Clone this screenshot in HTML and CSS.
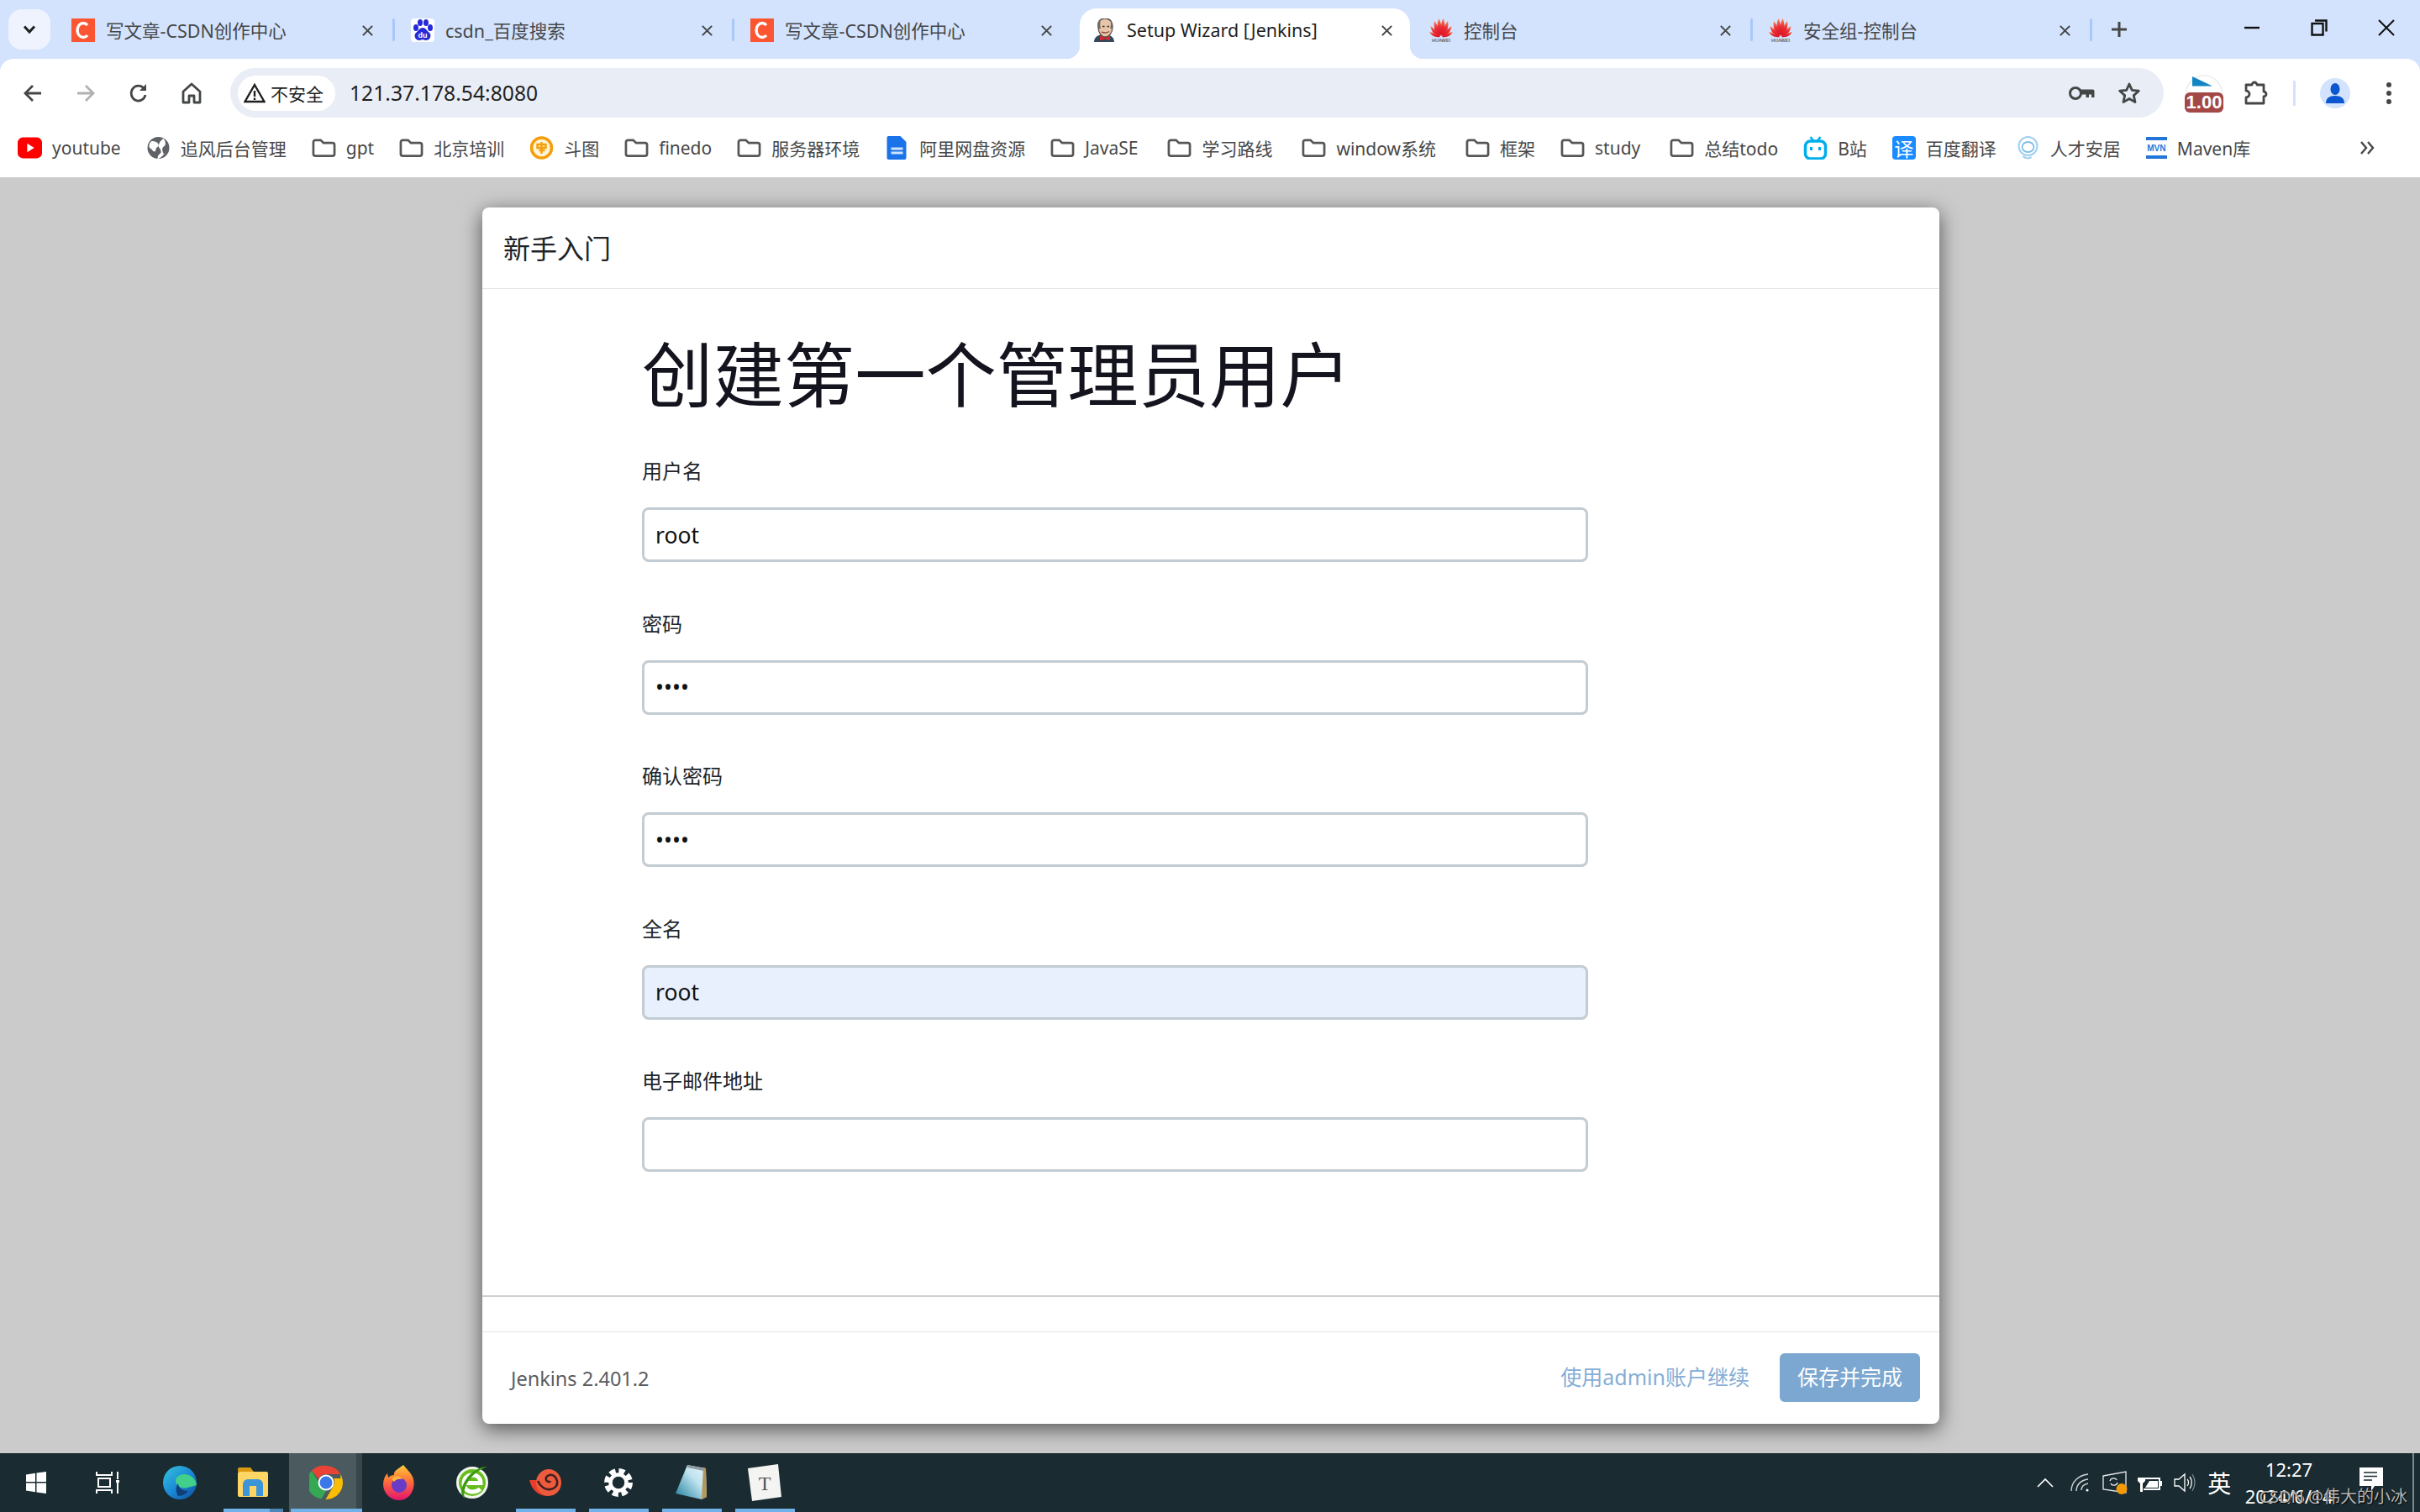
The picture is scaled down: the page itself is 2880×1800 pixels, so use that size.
FILE: index.html
```html
<!DOCTYPE html>
<html lang="zh-CN">
<head>
  <meta charset="UTF-8" />
  <title>Setup Wizard [Jenkins]</title>
  <link rel="stylesheet" href="styles.css">
</head>
<body>
  <svg class="defs" width="0" height="0">
    <symbol id="i-csdn" viewBox="0 0 28 28">
      <rect width="28" height="28" fill="#fc5531"/>
      <path d="M19 8a7 8.5 0 1 0 0 12" fill="none" stroke="#fff" stroke-width="3.4"/>
    </symbol>
    <symbol id="i-baidu" viewBox="0 0 28 28">
      <rect width="28" height="28" rx="4" fill="#fff"/>
      <g fill="#2529d8">
        <ellipse cx="6" cy="11" rx="3" ry="4"/>
        <ellipse cx="11" cy="5" rx="3" ry="4"/>
        <ellipse cx="18" cy="5" rx="3" ry="4"/>
        <ellipse cx="23" cy="11" rx="3" ry="4"/>
        <path d="M14 11c4 0 5 4 8 6 3 3 1 9-4 9-2 0-3-1-4-1s-2 1-4 1c-5 0-7-6-4-9 3-2 4-6 8-6z"/>
      </g>
    </symbol>
    <symbol id="i-huawei" viewBox="0 0 28 28">
      <defs>
        <linearGradient id="hw" x1="0" y1="0" x2="0" y2="1"><stop offset="0" stop-color="#f58a5c"/><stop offset=".5" stop-color="#ea2a35"/><stop offset="1" stop-color="#d9121f"/></linearGradient>
      </defs>
      <g fill="url(#hw)">
        <path d="M13.500 21C9 15 8.500 6 11.500 0c3 6 4 14 2 21z"/>
        <path d="M14.500 21c4.500-6 5-15 2-21-3 6-4 14-2 21z"/>
        <path d="M13 21C7 17 4.500 10 6 3c4 5 7 12 7 18z"/>
        <path d="M15 21c6-4 8.500-11 7-18-4 5-7 12-7 18z"/>
        <path d="M13 21.500C6 20 2 15 1.500 9 6 12 11 16 13 21.500z"/>
        <path d="M15 21.500c7-1.500 11-6.500 11.500-12.500C22 12 17 16 15 21.500z"/>
        <path d="M13 22C7 23 2.500 20.500 0 16c5 .5 10 2.500 13 6z"/>
        <path d="M15 22c6 1 10.500-1.500 13-6-5 .5-10 2.500-13 6z"/>
      </g>
    </symbol>
    <symbol id="i-jenkins" viewBox="0 0 28 28">
      <path d="M2 28c0-6 5-9 12-9s12 3 12 9z" fill="#2f4a5c"/>
      <path d="M7 10C6 4 9 0 15 0s9 4 9 10c0 7-4 12-9 12-4 0-8-5-8-12z" fill="#e8c4a8" stroke="#57534f" stroke-width="1.300"/>
      <path d="M7 13C5 7 7 3 10 1c-1 4-1 8 0 11zM24 12c1-4 0-7-2-9 0 4 0 7-1 9z" fill="#6f6a66"/>
      <path d="M12 9.500h2.500M17.500 9.500H20" stroke="#333" stroke-width="1.300"/>
      <path d="M11 16c3 1.500 6 1.500 9-.5" fill="none" stroke="#8d4a3e" stroke-width="1.400"/>
      <path d="M9 20.500l6 2.500 6-2.500v6l-6-2-6 2z" fill="#d8262c"/>
    </symbol>
    <symbol id="i-folder" viewBox="0 0 30 24">
      <path d="M2 5a2.500 2.500 0 0 1 2.500-2.500h6.500l3.500 3.500h11a2.500 2.500 0 0 1 2.500 2.500v11a2.500 2.500 0 0 1-2.500 2.500h-21a2.500 2.500 0 0 1-2.500-2.500z" fill="none" stroke="#565656" stroke-width="2.800"/>
    </symbol>
    <symbol id="i-close" viewBox="0 0 16 16">
      <path d="M2 2l12 12M14 2L2 14" fill="none" stroke="#444746" stroke-width="2.200"/>
    </symbol>
  </svg>

  <div class="browser-top">
    <div class="tabstrip">
      <button class="tab-search">
        <svg width="16" height="12" viewBox="0 0 16 12"><path d="M2 2.500l6 6.500 6-6.500" fill="none" stroke="#1f1f1f" stroke-width="3"/></svg>
      </button>
      <div class="tabs">
        <div class="tab">
          <svg class="favicon"><use href="#i-csdn"/></svg>
          <span class="tab-title">写文章-CSDN创作中心</span>
          <svg class="tab-close"><use href="#i-close"/></svg>
          <span class="tab-sep"></span>
        </div>
        <div class="tab">
          <svg class="favicon" viewBox="0 0 28 28">
            <use href="#i-baidu" width="28" height="28"/>
            <text x="14" y="23" class="svg-small" font-size="9" fill="#fff" text-anchor="middle">du</text>
          </svg>
          <span class="tab-title">csdn_百度搜索</span>
          <svg class="tab-close"><use href="#i-close"/></svg>
          <span class="tab-sep"></span>
        </div>
        <div class="tab">
          <svg class="favicon"><use href="#i-csdn"/></svg>
          <span class="tab-title">写文章-CSDN创作中心</span>
          <svg class="tab-close"><use href="#i-close"/></svg>
        </div>
        <div class="tab active">
          <svg class="favicon"><use href="#i-jenkins"/></svg>
          <span class="tab-title">Setup Wizard [Jenkins]</span>
          <svg class="tab-close"><use href="#i-close"/></svg>
        </div>
        <div class="tab">
          <svg class="favicon" viewBox="0 0 28 28">
            <use href="#i-huawei" width="28" height="28"/>
            <text x="14" y="28" class="svg-small" font-size="5.500" fill="#666" text-anchor="middle">HUAWEI</text>
          </svg>
          <span class="tab-title">控制台</span>
          <svg class="tab-close"><use href="#i-close"/></svg>
          <span class="tab-sep"></span>
        </div>
        <div class="tab">
          <svg class="favicon" viewBox="0 0 28 28">
            <use href="#i-huawei" width="28" height="28"/>
            <text x="14" y="28" class="svg-small" font-size="5.500" fill="#666" text-anchor="middle">HUAWEI</text>
          </svg>
          <span class="tab-title">安全组-控制台</span>
          <svg class="tab-close"><use href="#i-close"/></svg>
          <span class="tab-sep"></span>
        </div>
      </div>
      <svg class="tab-new" width="20" height="20" viewBox="0 0 20 20"><path d="M10 1v18M1 10h18" fill="none" stroke="#444746" stroke-width="3"/></svg>
      <div class="window-controls">
        <span><svg width="20" height="20" viewBox="0 0 20 20"><path d="M1 10h18" stroke="#111" stroke-width="2.400"/></svg></span>
        <span><svg width="20" height="20" viewBox="0 0 20 20"><path d="M5 1.500h13.500v13M1.500 5h13v13.500h-13z" fill="none" stroke="#111" stroke-width="2.400"/></svg></span>
        <span><svg width="20" height="20" viewBox="0 0 20 20"><path d="M1 1l18 18M19 1L1 19" fill="none" stroke="#111" stroke-width="2"/></svg></span>
      </div>
    </div>

    <div class="toolbar">
      <span class="nav-btn"><svg width="24" height="24" viewBox="0 0 24 24"><path d="M22 12H3M12 3l-9 9 9 9" fill="none" stroke="#444746" stroke-width="2.800"/></svg></span>
      <span class="nav-btn"><svg width="24" height="24" viewBox="0 0 24 24"><path d="M2 12h19M12 3l9 9-9 9" fill="none" stroke="#b0b1b3" stroke-width="2.800"/></svg></span>
      <span class="nav-btn"><svg width="24" height="24" viewBox="0 0 24 24"><path d="M20 14a8.500 9 0 1 1-2-8" fill="none" stroke="#444746" stroke-width="2.800"/><path d="M21 1v8h-8z" fill="#444746"/></svg></span>
      <span class="nav-btn"><svg width="24" height="26" viewBox="0 0 24 26"><path d="M2 11L12 2l10 9v13h-7v-8H9v8H2z" fill="none" stroke="#444746" stroke-width="2.800" stroke-linejoin="round"/></svg></span>
      <div class="omnibox">
        <div class="chip">
          <svg width="26" height="24" viewBox="0 0 26 24"><path d="M13 2l11.500 20h-23z" fill="none" stroke="#1f1f1f" stroke-width="2.400"/><path d="M13 9v7M13 17.500v2.500" stroke="#1f1f1f" stroke-width="2.400"/></svg>
          <span>不安全</span>
        </div>
        <span class="url">121.37.178.54:8080</span>
        <svg class="omni-key" width="32" height="20" viewBox="0 0 32 20"><circle cx="9" cy="10" r="6.500" fill="none" stroke="#444746" stroke-width="3"/><path d="M15 5.500h14.500a2 2 0 0 1 2 2V15h-3.500v-3.500h-3V15h-3.500v-3.500H15z" fill="#444746"/></svg>
        <svg class="omni-star" width="28" height="28" viewBox="0 0 28 28"><path d="M14 3l3.300 7.400 8 .8-6 5.400 1.700 8L14 20.500 7 24.600l1.700-8-6-5.400 8-.8z" fill="none" stroke="#444746" stroke-width="2.800" stroke-linejoin="round"/></svg>
      </div>
      <div class="ext-badge">
        <svg width="46" height="24" viewBox="0 0 46 24"><path d="M1 22C3 9 12 1 23 1s20 8 22 21" fill="none" stroke="#ececec" stroke-width="1.500"/><path d="M9 2l24 11.500H9z" fill="#1286c4"/></svg>
        <span>1.00</span>
      </div>
      <svg class="ext-puzzle" width="30" height="32" viewBox="0 0 30 32"><path d="M3 6h7a3 3 0 0 1 6 0h8v8a3 3 0 0 1 0 6v8H3v-7a4 4 0 0 0 0-8z" fill="none" stroke="#444746" stroke-width="2.800" stroke-linejoin="round"/></svg>
      <span class="toolbar-sep"></span>
      <span class="profile">
        <svg width="22" height="24" viewBox="0 0 22 24"><ellipse cx="11" cy="7" rx="5.500" ry="7" fill="#0b57d0"/><path d="M0 24c0-6 4-9 11-9s11 3 11 9z" fill="#0b57d0"/></svg>
      </span>
      <svg class="menu-dots" width="8" height="26" viewBox="0 0 8 26"><circle cx="4" cy="3" r="3" fill="#444746"/><circle cx="4" cy="13" r="3" fill="#444746"/><circle cx="4" cy="23" r="3" fill="#444746"/></svg>
    </div>
  </div>

  <div class="bookmarks">
    <a class="bookmark">
      <svg class="bm-icon" viewBox="0 0 28 24"><rect width="28" height="24" rx="6" fill="#f00"/><path d="M11 7l8 5-8 5z" fill="#fff"/></svg>
      <span>youtube</span>
    </a>
    <a class="bookmark">
      <svg class="bm-icon" viewBox="0 0 28 28"><circle cx="14" cy="14" r="13" fill="#5f6368"/><path d="M6 6c4 0 7 1 8 4s-3 3-3 6-3 3-4 1-4-2-4-5 1-5 3-6zM20 3c3 3 3 8 1 9s-3 3-2 6 1 4 3 2c-5 6-7 7-9 7 0-3 1-5 3-6s1-5-1-7 0-8 5-11z" fill="#fff"/></svg>
      <span>追风后台管理</span>
    </a>
    <a class="bookmark"><svg class="bm-icon"><use href="#i-folder"/></svg><span>gpt</span></a>
    <a class="bookmark"><svg class="bm-icon"><use href="#i-folder"/></svg><span>北京培训</span></a>
    <a class="bookmark">
      <svg class="bm-icon" viewBox="0 0 28 28"><circle cx="14" cy="14" r="12" fill="#fff4d8" stroke="#f59e0b" stroke-width="3.500"/><path d="M9 10h10v4H9zM11 17h7M14 7v14" fill="none" stroke="#f59e0b" stroke-width="2.400"/></svg>
      <span>斗图</span>
    </a>
    <a class="bookmark"><svg class="bm-icon"><use href="#i-folder"/></svg><span>finedo</span></a>
    <a class="bookmark"><svg class="bm-icon"><use href="#i-folder"/></svg><span>服务器环境</span></a>
    <a class="bookmark">
      <svg class="bm-icon" viewBox="0 0 28 28"><path d="M4 0h14l7 7v19a2 2 0 0 1-2 2H4a2 2 0 0 1-2-2V2a2 2 0 0 1 2-2z" fill="#1a73e8"/><path d="M7 15h14M7 20h14" stroke="#cfe2ff" stroke-width="3"/></svg>
      <span>阿里网盘资源</span>
    </a>
    <a class="bookmark"><svg class="bm-icon"><use href="#i-folder"/></svg><span>JavaSE</span></a>
    <a class="bookmark bm-push"><svg class="bm-icon"><use href="#i-folder"/></svg><span>学习路线</span></a>
    <a class="bookmark bm-push"><svg class="bm-icon"><use href="#i-folder"/></svg><span>window系统</span></a>
    <a class="bookmark bm-push"><svg class="bm-icon"><use href="#i-folder"/></svg><span>框架</span></a>
    <a class="bookmark"><svg class="bm-icon"><use href="#i-folder"/></svg><span>study</span></a>
    <a class="bookmark bm-push"><svg class="bm-icon"><use href="#i-folder"/></svg><span>总结todo</span></a>
    <a class="bookmark">
      <svg class="bm-icon" viewBox="0 0 28 28"><path d="M8 1l4 5M20 1l-4 5" stroke="#00aeec" stroke-width="2.500"/><rect x="2" y="6" width="24" height="21" rx="6" fill="none" stroke="#00aeec" stroke-width="3.500"/><path d="M9 13v4M19 13v4" stroke="#00aeec" stroke-width="3"/></svg>
      <span>B站</span>
    </a>
    <a class="bookmark">
      <span class="bm-translate">译</span>
      <span>百度翻译</span>
    </a>
    <a class="bookmark bm-pull">
      <svg class="bm-icon" viewBox="0 0 28 28"><ellipse cx="14" cy="12" rx="11" ry="11" fill="none" stroke="#9fd0f2" stroke-width="2"/><ellipse cx="14" cy="13" rx="7" ry="6" fill="none" stroke="#7fbce6" stroke-width="1.800"/><path d="M8 24c3 3 8 3 10 1" fill="none" stroke="#9fd0f2" stroke-width="2"/></svg>
      <span>人才安居</span>
    </a>
    <a class="bookmark">
      <span class="bm-maven">MVN</span>
      <span>Maven库</span>
    </a>
    <svg class="bm-more" width="18" height="16" viewBox="0 0 18 16"><path d="M2 1l6 7-6 7M10 1l6 7-6 7" fill="none" stroke="#444746" stroke-width="2.400"/></svg>
  </div>

  <div class="backdrop">
    <div class="card">
      <div class="card-header">新手入门</div>
      <div class="card-body">
        <h1>创建第一个管理员用户</h1>
        <div class="field">
          <label>用户名</label>
          <input type="text" value="root">
        </div>
        <div class="field">
          <label>密码</label>
          <input type="password" value="root">
        </div>
        <div class="field">
          <label>确认密码</label>
          <input type="password" value="root">
        </div>
        <div class="field">
          <label>全名</label>
          <input class="autofilled" type="text" value="root">
        </div>
        <div class="field">
          <label>电子邮件地址</label>
          <input type="text" value="">
        </div>
      </div>
      <div class="card-spacer"></div>
      <div class="card-footer">
        <span class="version">Jenkins 2.401.2</span>
        <a class="skip-link">使用admin账户继续</a>
        <button class="save-btn">保存并完成</button>
      </div>
    </div>
  </div>

  <div class="taskbar">
    <span class="slot slot-start">
      <svg width="24" height="26" viewBox="0 0 24 26"><path d="M0 3.500l11-1.800V12H0zM12.500 1.500L24 0v12H12.500zM0 13.500h11v10.800L0 22.500zM12.500 13.500H24V26l-11.500-1.600z" fill="#fff"/></svg>
    </span>
    <span class="slot slot-start">
      <svg width="28" height="26" viewBox="0 0 28 26"><path d="M1 0v4h18V0M3 8h14v10H3zM1 26v-4h18v4M26 0v9M26 13v13" fill="none" stroke="#fff" stroke-width="2"/><rect x="24" y="10" width="4" height="3" fill="#fff"/></svg>
    </span>
    <span class="slot">
      <svg width="42" height="42" viewBox="0 0 42 42">
        <defs><linearGradient id="edge" x1="0" y1="0" x2="1" y2="1"><stop offset="0" stop-color="#36c6d8"/><stop offset=".5" stop-color="#1b8ad8"/><stop offset="1" stop-color="#0f4f9c"/></linearGradient></defs>
        <circle cx="21" cy="21" r="20" fill="url(#edge)"/>
        <path d="M41 24c-1-9-8-13-15-13-6 0-10 4-10 8 0 6 8 10 14 8 4-1 8-2 11-3z" fill="#41cf8a"/>
        <path d="M19 22c0 5 5 9 12 9-3 4-7 6-12 6-2-3-4-10 0-15z" fill="#123f7a"/>
      </svg>
    </span>
    <span class="slot running explorer">
      <svg width="36" height="36" viewBox="0 0 36 36"><path d="M0 2a2 2 0 0 1 2-2h13l4 5H0z" fill="#d99a0f"/><rect y="5" width="36" height="30" rx="2" fill="#ffd564"/><path d="M6 34V20a6 6 0 0 1 6-6h12a6 6 0 0 1 6 6v14h-8V22h-8v12z" fill="#3c95d8"/></svg>
    </span>
    <span class="slot running active">
      <svg width="40" height="42" viewBox="0 0 40 40">
        <path d="M20 0a20 20 0 0 1 17.300 10H20a10 10 0 0 0-9 5.500L3 5.700A20 20 0 0 1 20 0z" fill="#ea4335"/>
        <path d="M3 5.700l8.700 14.300A10 10 0 0 0 20 30l-5.500 9.300A20 20 0 0 1 3 5.700z" fill="#34a853"/>
        <path d="M37.300 10A20 20 0 0 1 20 40h-.5l8.800-15A10 10 0 0 0 29 15h8.300z" fill="#fbbc05"/>
        <circle cx="20" cy="20" r="9.500" fill="#fff"/><circle cx="20" cy="20" r="7.500" fill="#3b78e7"/>
      </svg>
    </span>
    <span class="slot">
      <svg width="38" height="42" viewBox="0 0 38 42">
        <defs><linearGradient id="fox" x1="0" y1="0" x2="0" y2="1"><stop offset="0" stop-color="#ffc93a"/><stop offset=".45" stop-color="#ff7139"/><stop offset="1" stop-color="#e3146f"/></linearGradient></defs>
        <path d="M24 0c4 5 8 8 11 14 5 12-2 28-16 28C8 42 0 33 0 23c0-5 2-10 5-13l1 5c2-2 4-3 7-3-1-5 5-7 11-12z" fill="url(#fox)"/>
        <circle cx="19" cy="24" r="9" fill="#6a3bc4"/>
        <path d="M10 16c5-4 11-3 13 1-4-1-8 0-10 3z" fill="#ffb53a"/>
      </svg>
    </span>
    <span class="slot">
      <svg width="40" height="42" viewBox="0 0 40 42">
        <circle cx="20" cy="21" r="17.500" fill="#68bd1e" stroke="#f2f5ee" stroke-width="3"/>
        <path d="M10 21.500h20c0-6-4-9.500-10-9.500s-10 4-10 10 4.500 10 10 10c4 0 7-1 9.500-3.500" fill="none" stroke="#fff" stroke-width="5"/>
        <path d="M38 2C24 2 11 14 7 30c0 4 1 7 4 10-1-5-1-8 1-14C16 15 26 6 38 2z" fill="#3d9a12"/>
      </svg>
    </span>
    <span class="slot running">
      <svg width="38" height="33" viewBox="0 0 38 33">
        <path d="M0 13h9c2 6 7 9 13 9v10C11 32 3 25 0 13z" fill="#e83c2c"/>
        <ellipse cx="23" cy="16" rx="15" ry="16" fill="#ee5a3c"/>
        <path d="M10 14c3 7 9 11 15 10 6-1 9-5 8-10-1-5-5-8-9-7-4 1-5 4-4 6 1 2 4 3 5 1" fill="none" stroke="#3c2020" stroke-width="2.600"/>
      </svg>
    </span>
    <span class="slot running">
      <svg width="34" height="34" viewBox="0 0 34 34"><circle cx="17" cy="17" r="9.500" fill="none" stroke="#fff" stroke-width="4.500"/><circle cx="17" cy="17" r="14" fill="none" stroke="#fff" stroke-width="6" stroke-dasharray="7 4"/></svg>
    </span>
    <span class="slot running">
      <svg width="38" height="42" viewBox="0 0 38 42">
        <defs><linearGradient id="pad" x1="0" y1="1" x2="1" y2="0"><stop offset="0" stop-color="#1d7d9c"/><stop offset=".6" stop-color="#bfe3ef"/><stop offset="1" stop-color="#eaf6fb"/></linearGradient></defs>
        <path d="M14 0l22 4 1 34-6 3L0 34z" fill="url(#pad)"/><path d="M31 41l6-3-1-34-3-1z" fill="#b4975a"/><path d="M14 0l20 4-1 3L14 3z" fill="#8e9aa0"/>
      </svg>
    </span>
    <span class="slot running">
      <svg width="42" height="44" viewBox="0 0 42 44"><path d="M1 5l36-5 4 39-35 5z" fill="#f4f4f2"/><text x="21" y="31" class="svg-serif" font-size="24" fill="#555" text-anchor="middle">T</text></svg>
    </span>

    <div class="tray">
      <span class="tray-item"><svg width="20" height="12" viewBox="0 0 20 12"><path d="M1 11l9-9 9 9" fill="none" stroke="#fff" stroke-width="1.600"/></svg></span>
      <span class="tray-item"><svg width="22" height="22" viewBox="0 0 22 22"><path d="M1 21C1 10 10 2 21 1M7 21c0-8 6-13 14-14M13 20c0-4 3-7 8-8" fill="none" stroke="#cfd4d6" stroke-width="1.400"/><circle cx="20" cy="20" r="1.600" fill="#fff"/></svg></span>
      <span class="tray-item"><svg width="30" height="28" viewBox="0 0 30 28"><path d="M1 6l27-5v25L1 22z" fill="none" stroke="#e8ecee" stroke-width="1.300"/><path d="M9 12c1-4 7-4 8-1M18 14c-1 4-7 4-8 1" fill="none" stroke="#e8ecee" stroke-width="1.300"/><circle cx="23" cy="21.500" r="6.500" fill="#f59a07"/></svg></span>
      <span class="tray-item"><svg width="30" height="24" viewBox="0 0 30 24"><path d="M3 0v6M8 0v6M1 6h9v4l-3 3v10H4V13l-3-3z" fill="#fff"/><path d="M8 7h19v13H8" fill="none" stroke="#fff" stroke-width="2"/><path d="M10 18l5-8h10v8z" fill="#fff"/><rect x="28" y="10" width="2" height="6" fill="#fff"/></svg></span>
      <span class="tray-item"><svg width="26" height="24" viewBox="0 0 26 24"><path d="M1 8h5l7-6v20l-7-6H1z" fill="none" stroke="#fff" stroke-width="1.300"/><path d="M16 8c2 2 2 6 0 8M19 5c3 4 3 10 0 14" fill="none" stroke="#fff" stroke-width="1.300"/><path d="M22 2c4 6 4 14 0 20" fill="none" stroke="#7d8a8e" stroke-width="1.300"/></svg></span>
      <span class="tray-item ime">英</span>
      <div class="clock">
        <span>12:27</span>
        <span>2024/6/14</span>
      </div>
      <span class="notify">
        <svg width="28" height="28" viewBox="0 0 28 28"><path d="M0 0h28v22H18l-4 6v-6H0z" fill="#fff"/><path d="M5 6h16M5 10.500h16M5 15h10" stroke="#1a2b31" stroke-width="1.400"/></svg>
      </span>
      <span class="show-desktop"></span>
    </div>
    <span class="watermark">CSDN @伟大的小冰</span>
  </div>
</body>
</html>
```

FILE: styles.css
```css
* {
  box-sizing: border-box;
}

body {
  margin: 0;
  width: 2880px;
  height: 1800px;
  display: flex;
  flex-direction: column;
  overflow: hidden;
  font-family: "Noto Sans", "Noto Sans CJK SC", sans-serif;
  background-color: #cbcbcb;
}

.defs {
  position: absolute;
}

.svg-small {
  font-family: "Liberation Sans", sans-serif;
  font-weight: bold;
}

.svg-serif {
  font-family: "Liberation Serif", serif;
}

/* tab strip */
.browser-top {
  flex: none;
  background-color: #d3e3fd;
}

.tabstrip {
  height: 70px;
  display: flex;
  align-items: flex-end;
}

.tab-search {
  width: 50px;
  height: 48px;
  margin: 0 6px 11px 10px;
  padding: 0;
  border: none;
  border-radius: 16px;
  background-color: #eef3fe;
  display: flex;
  align-items: center;
  justify-content: center;
}

.tabs {
  display: flex;
  height: 60px;
}

.tab {
  width: 404px;
  height: 60px;
  display: flex;
  align-items: center;
  padding: 0 0 8px 19px;
  position: relative;
}

.tab.active {
  width: 393px;
  margin: 0 4px 0 7px;
  padding-left: 15px;
  background-color: #fff;
  border-radius: 20px 20px 0 0;
}

.tab.active::before,
.tab.active::after {
  content: "";
  position: absolute;
  bottom: 0;
  width: 16px;
  height: 16px;
}

.tab.active::before {
  left: -16px;
  background: radial-gradient(circle at 0 0, #d3e3fd 16px, #fff 16.5px);
}

.tab.active::after {
  right: -16px;
  background: radial-gradient(circle at 100% 0, #d3e3fd 16px, #fff 16.5px);
}

.favicon {
  width: 28px;
  height: 28px;
  flex: none;
}

.tab-title {
  flex: 1;
  margin: 0 0 2px 13px;
  font-size: 21.5px;
  color: #45474a;
  white-space: nowrap;
  overflow: hidden;
}

.tab.active .tab-title {
  color: #1f1f1f;
}

.tab-close {
  width: 15px;
  height: 15px;
  flex: none;
  margin-right: 25px;
}

.tab.active .tab-close {
  margin-right: 20px;
}

.tab-sep {
  position: absolute;
  right: 0;
  top: 12px;
  width: 3px;
  height: 27px;
  border-radius: 2px;
  background-color: #a9c7f7;
}

.tab-new {
  flex: none;
  margin: 0 0 25px 22px;
}

.window-controls {
  margin-left: auto;
  display: flex;
  height: 70px;
}

.window-controls span {
  width: 80px;
  display: flex;
  align-items: center;
  justify-content: center;
  padding-bottom: 4px;
}

/* address bar row */
.toolbar {
  height: 74px;
  display: flex;
  align-items: center;
  padding: 7px 0 0 7px;
  background-color: #fff;
  border-radius: 16px 16px 0 0;
}

.nav-btn {
  width: 63px;
  flex: none;
  display: flex;
  justify-content: center;
}

.omnibox {
  width: 2301px;
  height: 59px;
  margin-left: 15px;
  padding-left: 9px;
  display: flex;
  align-items: center;
  border-radius: 30px;
  background-color: #e9edf6;
}

.chip {
  width: 116px;
  height: 42px;
  padding-left: 7px;
  display: flex;
  align-items: center;
  gap: 6px;
  border-radius: 21px;
  background-color: #fff;
  font-size: 21px;
  color: #1f1f1f;
}

.url {
  margin-left: 17px;
  font-size: 24.7px;
  color: #1f1f1f;
}

.omni-key {
  margin-left: auto;
}

.omni-star {
  margin: 0 27px 0 27px;
}

.ext-badge {
  width: 46px;
  height: 46px;
  margin-left: 25px;
  display: flex;
  flex-direction: column;
  align-items: center;
  justify-content: flex-end;
}

.ext-badge svg {
  flex: none;
}

.ext-badge span {
  width: 46px;
  height: 24px;
  margin-top: -3px;
  position: relative;
  border-radius: 6px;
  background-color: #a34747;
  color: #fff;
  font-family: "Liberation Sans", sans-serif;
  font-size: 22px;
  font-weight: bold;
  line-height: 24px;
  text-align: center;
}

.ext-puzzle {
  flex: none;
  margin-left: 24px;
}

.toolbar-sep {
  width: 3px;
  height: 30px;
  margin-left: 29px;
  background-color: #d3e3fd;
}

.profile {
  width: 36px;
  height: 36px;
  margin-left: 29px;
  display: flex;
  align-items: center;
  justify-content: center;
  border-radius: 50%;
  background-color: #d3e3fd;
}

.menu-dots {
  flex: none;
  margin-left: 42px;
}

/* bookmarks row */
.bookmarks {
  height: 67px;
  flex: none;
  display: flex;
  align-items: center;
  padding: 0 0 3px 21px;
  gap: 30px;
  background-color: #fff;
  font-size: 21px;
  color: #474747;
}

.bookmark {
  display: flex;
  align-items: center;
  gap: 12px;
  white-space: nowrap;
}

.bm-push {
  margin-left: 5px;
}

.bm-pull {
  margin-left: -7px;
}

.bm-icon {
  width: 29px;
  height: 28px;
  flex: none;
}

.bm-translate {
  width: 28px;
  height: 28px;
  display: flex;
  align-items: center;
  justify-content: center;
  border-radius: 4px;
  background-color: #1a8cff;
  color: #fff;
  font-size: 23px;
}

.bm-maven {
  width: 25px;
  height: 26px;
  display: flex;
  align-items: center;
  justify-content: center;
  border-top: 4px solid #2376d8;
  border-bottom: 4px solid #2376d8;
  color: #2376d8;
  font-family: "Liberation Sans", sans-serif;
  font-size: 10px;
  font-weight: bold;
}

.bm-more {
  margin-left: auto;
  margin-right: 54px;
}

/* wizard dialog */
.backdrop {
  flex: 1;
  padding: 36px 0 35px 574px;
  display: flex;
}

.card {
  width: 1734px;
  display: flex;
  flex-direction: column;
  border-radius: 8px;
  background-color: #fff;
  box-shadow: 0 6px 24px rgba(0, 0, 0, 0.6);
}

.card-header {
  height: 97px;
  flex: none;
  padding: 0 0 3px 25px;
  display: flex;
  align-items: center;
  border-bottom: 1px solid #e5e5e5;
  font-size: 32px;
  color: #212529;
}

.card-body {
  flex: 1;
  padding: 52px 0 0 190px;
  border-bottom: 2px solid #cfcfcf;
}

h1 {
  height: 100px;
  margin: 0 0 42px;
  font-size: 84.4px;
  font-weight: 400;
  line-height: 100px;
  color: #14141f;
}

.field {
  width: 1126px;
  margin-bottom: 50.5px;
}

.field label {
  display: block;
  height: 44px;
  margin-bottom: 22px;
  font-size: 24px;
  line-height: 46px;
  color: #212529;
}

.field input {
  display: block;
  width: 100%;
  height: 65px;
  padding: 0 13px;
  border: 3px solid #c2ccd2;
  border-radius: 8px;
  background-color: #fff;
  font-family: inherit;
  font-size: 26.5px;
  color: #111;
  outline: none;
}

.field input.autofilled {
  background-color: #e8f0fe;
}

.card-spacer {
  height: 42px;
  flex: none;
  border-bottom: 1px solid #e5e5e5;
}

.card-footer {
  height: 109px;
  flex: none;
  display: flex;
  align-items: center;
  padding: 0 23px 2px 34px;
}

.version {
  margin-top: 3px;
  font-size: 23.5px;
  color: #5a5c60;
}

.skip-link {
  margin: 0 0 3px auto;
  font-size: 25px;
  color: #85aed6;
}

.save-btn {
  width: 167px;
  height: 58px;
  margin-left: 36px;
  padding: 0 0 4px;
  border: none;
  border-radius: 6px;
  background-color: #7ba7d0;
  color: #fff;
  font-family: inherit;
  font-size: 25px;
}

/* windows taskbar */
.taskbar {
  height: 70px;
  flex: none;
  position: relative;
  display: flex;
  align-items: center;
  background-color: #1a2b31;
}

.slot {
  width: 87px;
  height: 70px;
  flex: none;
  position: relative;
  display: flex;
  align-items: center;
  justify-content: center;
}

.slot-start {
  width: 85px;
}

.slot.running::after {
  content: "";
  position: absolute;
  left: 9px;
  right: 7px;
  bottom: 0;
  height: 4px;
  background-color: #6fb1e8;
}

.slot.active {
  background: linear-gradient(90deg, #4b5a5e 92%, #37464b 92%);
}

.slot.active::after {
  left: 2px;
  right: 0;
}

.slot.explorer::after {
  background: linear-gradient(90deg, #6fb1e8 78%, #4d86b5 78%);
}

.tray {
  margin-left: auto;
  height: 70px;
  display: flex;
  align-items: center;
  color: #fff;
}

.tray-item {
  width: 41.5px;
  display: flex;
  justify-content: center;
}

.ime {
  font-size: 28px;
}

.clock {
  width: 124px;
  display: flex;
  flex-direction: column;
  align-items: center;
  font-size: 22px;
  line-height: 32px;
}

.notify {
  width: 72px;
  display: flex;
  justify-content: center;
  margin-bottom: 8px;
}

.show-desktop {
  width: 2px;
  height: 70px;
  margin: 0 7px 0 13px;
  background-color: #7b8a8e;
}

.watermark {
  position: absolute;
  right: 15px;
  bottom: 5px;
  font-size: 20px;
  color: #b4b4b4;
  text-shadow: 1px 1px 1px #000;
  white-space: nowrap;
}
```
